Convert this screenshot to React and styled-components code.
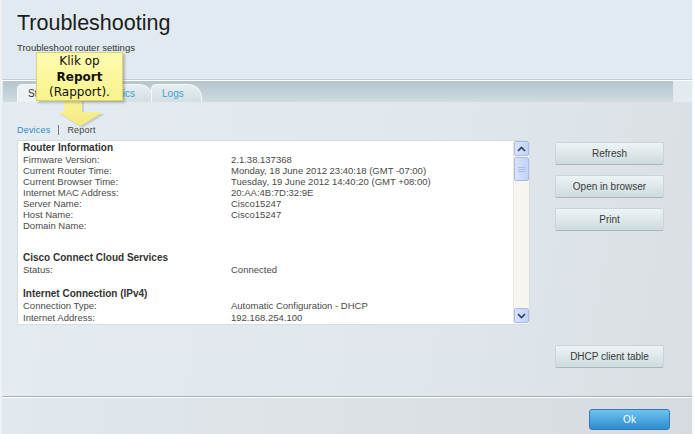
import React from 'react'
import styled, { createGlobalStyle } from 'styled-components'

const GlobalStyle = createGlobalStyle`
  html, body { margin: 0; padding: 0; background: #ffffff; }
  * { box-sizing: border-box; }
`

const Frame = styled.div`
  position: relative;
  width: 694px;
  height: 434px;
  overflow: hidden;
  display: flex;
  flex-direction: column;
  border-left: 2px solid #eef2f4;
  border-right: 2px solid #f8fafb;
  font-family: "Liberation Sans", Arial, sans-serif;
  background: #e2eaef;
`

const Header = styled.header`
  height: 80px;
  padding: 10px 15px 0;
  background: #e0eaf0;
  border-bottom: 1px solid #c2ccd1;
`

const Title = styled.h1`
  margin: 0;
  font-size: 21.5px;
  font-weight: normal;
  line-height: 26px;
  color: #1c1c1c;
`

const Subtitle = styled.p`
  margin: 6px 0 0;
  font-size: 9.5px;
  color: #333;
`

const TabStrip = styled.div`
  border-top: 1px solid #ffffff;
  background: #e3ebf0;
`

const TabBar = styled.nav`
  height: 21px;
  margin: 0 19px 0 1px;
  padding-left: 14px;
  display: flex;
  align-items: flex-end;
  background: linear-gradient(#b4c5cb, #cfdce1);
`

const Tab = styled.div`
  height: 18px;
  margin-right: -2px;
  padding: 0 17px 0 10px;
  display: flex;
  align-items: center;
  font-size: 10px;
  color: ${p => (p.$active ? '#333' : '#3aa3cf')};
  background: ${p => (p.$active ? '#edf2f5' : 'linear-gradient(#e6eef1, #d3dfe3)')};
  border: 1px solid #f4f8f9;
  border-bottom: none;
  border-radius: 5px 14px 0 0;
  position: relative;
  z-index: ${p => (p.$active ? 2 : 1)};
`

const Body = styled.main`
  flex: 1;
  display: flex;
  gap: 25px;
  padding: 22px 0 0 15px;
  background: linear-gradient(100deg, #e4ecf1 0%, #e1e8ed 60%, #d9dfe3 100%);
`

const LeftCol = styled.section`
  width: 513px;
  display: flex;
  flex-direction: column;
`

const SubNav = styled.div`
  display: flex;
  align-items: center;
  gap: 8px;
  height: 11px;
  font-size: 9px;
  letter-spacing: 0.2px;
  margin-bottom: 5px;
`

const SubLink = styled.span`
  color: ${p => (p.$active ? '#2a8bcf' : '#444')};
`

const Divider = styled.span`
  width: 1px;
  height: 10px;
  background: #777;
`

const Panel = styled.div`
  height: 185px;
  display: flex;
  background: #ffffff;
  border: 1px solid #d6dee2;
`

const Report = styled.div`
  flex: 1;
  overflow: hidden;
  padding: 0 0 0 5px;
`

const Section = styled.div`
  margin-top: ${p => p.$gap || 0}px;
`

const SectionTitle = styled.div`
  font-size: 10px;
  font-weight: bold;
  line-height: 13px;
  color: #333;
`

const Row = styled.div`
  display: grid;
  grid-template-columns: 208px 1fr;
  font-size: 9.5px;
  line-height: 11px;
  color: #4a4a4a;
  height: ${p => p.$h || 11}px;
`

const Scrollbar = styled.div`
  width: 16px;
  display: flex;
  flex-direction: column;
  background: #f7f5ef;
  border-left: 1px solid #ece8df;
`

const ScrollBtn = styled.div`
  width: 15px;
  height: ${p => p.$h || 15}px;
  margin-top: ${p => p.$mt || 0}px;
  display: flex;
  align-items: center;
  justify-content: center;
  background: linear-gradient(90deg, #d9e4fb, #c2d3f6);
  border: 1px solid #a6bbe8;
  border-radius: 2px;
`

const RightCol = styled.aside`
  display: flex;
  flex-direction: column;
  gap: 10px;
  padding-top: 18px;
`

const Button = styled.button`
  width: 109px;
  height: 23px;
  margin-top: ${p => p.$mt || 0}px;
  padding: 0;
  font-family: "Liberation Sans", Arial, sans-serif;
  font-size: 10px;
  color: #3a3a3a;
  background: linear-gradient(#eef4f5, #cddbde);
  border: 1px solid #cbd5d8;
  border-bottom-color: #a9b7bb;
  border-radius: 2px;
`

const Footer = styled.footer`
  height: 38px;
  display: flex;
  justify-content: flex-end;
  padding: 12px 22px 0 0;
  border-top: 1px solid #a4afb6;
  box-shadow: inset 0 1px 0 #ffffff;
  background: linear-gradient(90deg, #e2e9ee, #d6dbde);
`

const OkButton = styled.button`
  width: 81px;
  height: 21px;
  padding: 0;
  font-family: "Liberation Sans", Arial, sans-serif;
  font-size: 10px;
  color: #ffffff;
  background: linear-gradient(#6ec2ef, #2d8cce);
  border: 1px solid #2b7cb9;
  border-radius: 3px;
`

const Callout = styled.div`
  position: absolute;
  left: 34px;
  top: 52px;
  width: 90px;
  z-index: 10;
`

const CalloutBox = styled.div`
  position: relative;
  width: 87px;
  height: 49px;
  padding-top: 1px;
  text-align: center;
  font-family: "DejaVu Sans", Verdana, sans-serif;
  font-size: 12px;
  line-height: 15.5px;
  color: #111;
  background: linear-gradient(#fefbb0, #f9f38c);
  border: 1px solid #d9d27a;
  box-shadow: 2px 2px 2px rgba(90, 90, 70, 0.35);
  z-index: 2;
`

const Arrow = styled.svg`
  position: absolute;
  left: 0;
  top: 45px;
`

const Chevron = ({ down }) => (
  <svg width="9" height="6" viewBox="0 0 9 6">
    <path d={down ? 'M1 1 L4.5 4.5 L8 1' : 'M1 5 L4.5 1.5 L8 5'} fill="none" stroke="#2d3d66" strokeWidth="1.6" />
  </svg>
)

const routerInfo = [
  ['Firmware Version:', '2.1.38.137368'],
  ['Current Router Time:', 'Monday, 18 June 2012 23:40:18 (GMT -07:00)'],
  ['Current Browser Time:', 'Tuesday, 19 June 2012 14:40:20 (GMT +08:00)'],
  ['Internet MAC Address:', '20:AA:4B:7D:32:9E'],
  ['Server Name:', 'Cisco15247'],
  ['Host Name:', 'Cisco15247'],
  ['Domain Name:', '']
]

const App = () => {
  return (
    <>
      <GlobalStyle />
      <Frame>
        <Header>
          <Title>Troubleshooting</Title>
          <Subtitle>Troubleshoot router settings</Subtitle>
        </Header>
        <TabStrip>
          <TabBar>
            <Tab $active>Status</Tab>
            <Tab>Diagnostics</Tab>
            <Tab>Logs</Tab>
          </TabBar>
        </TabStrip>
        <Body>
          <LeftCol>
            <SubNav>
              <SubLink $active>Devices</SubLink>
              <Divider />
              <SubLink>Report</SubLink>
            </SubNav>
            <Panel>
              <Report>
                <Section>
                  <SectionTitle>Router Information</SectionTitle>
                  {routerInfo.map(([k, v]) => (
                    <Row key={k}>
                      <span>{k}</span>
                      <span>{v}</span>
                    </Row>
                  ))}
                </Section>
                <Section $gap={20}>
                  <SectionTitle>Cisco Connect Cloud Services</SectionTitle>
                  <Row $h={12}>
                    <span>Status:</span>
                    <span>Connected</span>
                  </Row>
                </Section>
                <Section $gap={11}>
                  <SectionTitle>Internet Connection (IPv4)</SectionTitle>
                  <Row $h={12}>
                    <span>Connection Type:</span>
                    <span>Automatic Configuration - DHCP</span>
                  </Row>
                  <Row>
                    <span>Internet Address:</span>
                    <span>192.168.254.100</span>
                  </Row>
                </Section>
              </Report>
              <Scrollbar>
                <ScrollBtn><Chevron /></ScrollBtn>
                <ScrollBtn $h={24} $mt={1}>
                  <svg width="7" height="7" viewBox="0 0 7 7">
                    <path d="M0 1.5H7M0 3.5H7M0 5.5H7" stroke="#a8bce6" strokeWidth="1" />
                  </svg>
                </ScrollBtn>
                <ScrollBtn $mt={127}><Chevron down /></ScrollBtn>
              </Scrollbar>
            </Panel>
          </LeftCol>
          <RightCol>
            <Button>Refresh</Button>
            <Button>Open in browser</Button>
            <Button>Print</Button>
            <Button $mt={104}>DHCP client table</Button>
          </RightCol>
        </Body>
        <Footer>
          <OkButton>Ok</OkButton>
        </Footer>
        <Callout>
          <CalloutBox>
            Klik op<br />
            <b>Report</b><br />
            (Rapport).
          </CalloutBox>
          <Arrow width="70" height="40" viewBox="0 0 70 40">
            <defs>
              <linearGradient id="arrowFill" x1="0" y1="0" x2="0" y2="1">
                <stop offset="0" stopColor="#faf49a" />
                <stop offset="1" stopColor="#f3ec7e" />
              </linearGradient>
            </defs>
            <polygon points="30,2 48,2 48,17 69,17 46,31 24,17 30,17" fill="#9a9a90" opacity="0.35" />
            <polygon points="28,0 46,0 46,15 67,15 44,29 22,15 28,15" fill="url(#arrowFill)" />
          </Arrow>
        </Callout>
      </Frame>
    </>
  )
}

export default App
